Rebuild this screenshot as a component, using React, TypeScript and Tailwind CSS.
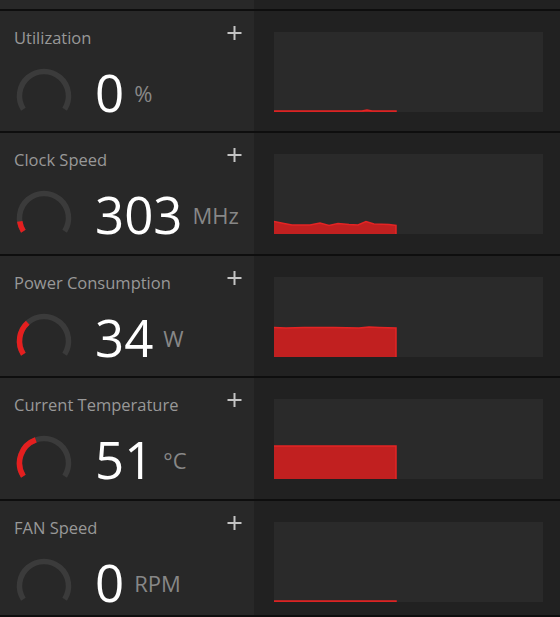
import React from 'react';

// ─── Data ─────────────────────────────────────────────────────────────────────

type Metric = {
  title: string;
  value: string;
  unit: string;
  level: number; // share of the gauge arc that is lit
  points: [number, number][]; // [x, height] inside the 122px history window
  height: number;
};

const metrics: Metric[] = [
  {
    title: 'Utilization',
    value: '0',
    unit: '%',
    level: 0,
    points: [[0, 1], [60, 1], [88, 1], [93, 2], [98, 1], [122, 1]],
    height: 120,
  },
  {
    title: 'Clock Speed',
    value: '303',
    unit: 'MHz',
    level: 0.1,
    points: [
      [0, 12.5], [10, 10.5], [18, 9], [36, 9], [46, 11], [55, 8.5], [64, 10.5],
      [75, 9.5], [84, 9], [92, 12.5], [100, 10], [115, 9.5], [122, 8.5],
    ],
    height: 121,
  },
  {
    title: 'Power Consumption',
    value: '34',
    unit: 'W',
    level: 0.33,
    points: [[0, 29.5], [12, 29], [30, 29.5], [60, 29.5], [85, 29], [95, 30], [105, 29.5], [122, 29]],
    height: 120,
  },
  {
    title: 'Current Temperature',
    value: '51',
    unit: '°C',
    level: 0.42,
    points: [[0, 33], [122, 33]],
    height: 121,
  },
  {
    title: 'FAN Speed',
    value: '0',
    unit: 'RPM',
    level: 0,
    points: [[0, 1], [122, 1]],
    height: 114,
  },
];

// ─── Gauge ────────────────────────────────────────────────────────────────────

const START = 237.5;
const SWEEP = 245;

function arc(from: number, to: number, r = 24.5, c = 30) {
  const pt = (deg: number) => {
    const a = (deg * Math.PI) / 180;
    return `${(c + r * Math.sin(a)).toFixed(2)} ${(c - r * Math.cos(a)).toFixed(2)}`;
  };
  const large = to - from > 180 ? 1 : 0;
  return `M ${pt(from)} A ${r} ${r} 0 ${large} 1 ${pt(to)}`;
}

function Gauge({ level }: { level: number }) {
  return (
    <svg width="60" height="60" viewBox="0 0 60 60" className="shrink-0">
      <path d={arc(START, START + SWEEP)} fill="none" stroke="#3b3b3b" strokeWidth="5.5" />
      {level > 0 && (
        <path d={arc(START, START + SWEEP * level)} fill="none" stroke="#e41f1f" strokeWidth="5.5" />
      )}
    </svg>
  );
}

// ─── History chart ────────────────────────────────────────────────────────────

function History({ points }: { points: [number, number][] }) {
  const top = points.map(([x, h]) => `${x},${80 - h}`).join(' ');
  const last = points[points.length - 1];
  return (
    <div className="w-[269px] h-[80px] bg-[#2a2a2a]">
      <svg width="269" height="80" viewBox="0 0 269 80">
        <polygon points={`0,80 ${top} 122,80`} fill="#c12020" />
        <polyline points={`${top} ${last[0]},80`} fill="none" stroke="#e42424" strokeWidth="1.5" />
      </svg>
    </div>
  );
}

// ─── Row ──────────────────────────────────────────────────────────────────────

function Plus() {
  return (
    <svg width="15" height="14" viewBox="0 0 15 14" className="mt-[-4px] shrink-0">
      <path d="M7.5 0v14M0.5 7h14" stroke="#c4c4c4" strokeWidth="2" />
    </svg>
  );
}

function MetricRow({ m }: { m: Metric }) {
  return (
    <div className="flex border-t-2 border-[#0e0e0e]" style={{ height: m.height + 2 }}>
      <div className="w-[254px] bg-[#282828] pl-[14px] pr-[12px] pt-[19px] flex flex-col">
        <div className="flex justify-between items-start">
          <span className="text-[16.5px] leading-none font-medium text-[#989898]">{m.title}</span>
          <Plus />
        </div>
        <div className="flex items-start mt-[19px]">
          <Gauge level={m.level} />
          <div className="flex items-end ml-[21px] mt-[1px]">
            <span className="text-[51px] leading-none text-white">{m.value}</span>
            <span className="text-[22px] leading-none text-[#878787] ml-[10px] mb-[14px]">{m.unit}</span>
          </div>
        </div>
      </div>
      <div className="flex-1 bg-[#212121] pl-[20px] pt-[21px]">
        <History points={m.points} />
      </div>
    </div>
  );
}

// ─── Main export ──────────────────────────────────────────────────────────────

export default function App() {
  return (
    <div
      className="w-[560px] h-[617px] overflow-hidden bg-[#0e0e0e]"
      style={{ fontFamily: '"Open Sans", "Noto Sans", sans-serif' }}
    >
      <div className="flex h-[9px]">
        <div className="w-[254px] bg-[#282828]" />
        <div className="flex-1 bg-[#212121]" />
      </div>
      {metrics.map((m) => (
        <MetricRow key={m.title} m={m} />
      ))}
    </div>
  );
}
